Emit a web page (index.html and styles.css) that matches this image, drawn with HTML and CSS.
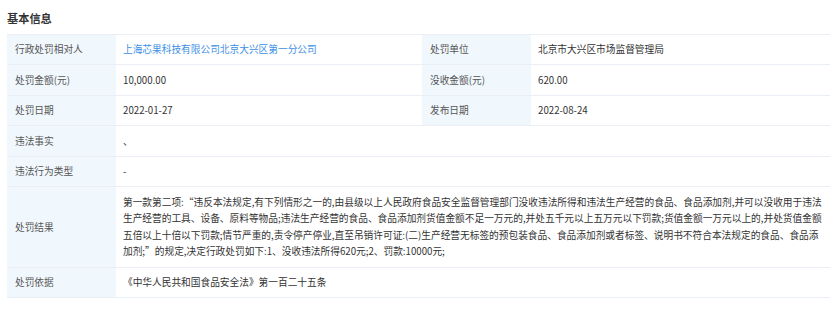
FILE: index.html
```html
<!DOCTYPE html>
<html lang="zh-CN">
<head>
<meta charset="utf-8">
<link rel="stylesheet" href="styles.css">
</head>
<body>
<div class="page">
  <h2 class="title">基本信息</h2>
  <div class="table">
    <div class="cell label">行政处罚相对人</div>
    <div class="cell value"><a class="link" href="#">上海芯果科技有限公司北京大兴区第一分公司</a></div>
    <div class="cell label">处罚单位</div>
    <div class="cell value">北京市大兴区市场监督管理局</div>

    <div class="cell label">处罚金额(元)</div>
    <div class="cell value">10,000.00</div>
    <div class="cell label">没收金额(元)</div>
    <div class="cell value">620.00</div>

    <div class="cell label">处罚日期</div>
    <div class="cell value">2022-01-27</div>
    <div class="cell label">发布日期</div>
    <div class="cell value">2022-08-24</div>

    <div class="cell label">违法事实</div>
    <div class="cell value wide">、</div>

    <div class="cell label">违法行为类型</div>
    <div class="cell value wide">-</div>

    <div class="cell label">处罚结果</div>
    <div class="cell value wide para">第一款第二项:“违反本法规定,有下列情形之一的,由县级以上人民政府食品安全监督管理部门没收违法所得和违法生产经营的食品、食品添加剂,并可以没收用于违法生产经营的工具、设备、原料等物品;违法生产经营的食品、食品添加剂货值金额不足一万元的,并处五千元以上五万元以下罚款;货值金额一万元以上的,并处货值金额五倍以上十倍以下罚款;情节严重的,责令停产停业,直至吊销许可证:(二)生产经营无标签的预包装食品、食品添加剂或者标签、说明书不符合本法规定的食品、食品添加剂;”的规定,决定行政处罚如下:1、没收违法所得620元;2、罚款:10000元;</div>

    <div class="cell label">处罚依据</div>
    <div class="cell value wide">《中华人民共和国食品安全法》第一百二十五条</div>
  </div>
</div>
</body>
</html>
```

FILE: styles.css
```css
html, body {
  margin: 0;
  padding: 0;
  background: #ffffff;
  overflow: hidden;
}
body {
  font-family: "Noto Sans CJK SC", "Microsoft YaHei", sans-serif;
  color: #333333;
}
.page {
  padding: 10px 0 0 7px;
}
.title {
  margin: 0;
  font-size: 11.2px;
  line-height: 16px;
  font-weight: bold;
  color: #333333;
}
.table {
  margin-top: 8px;
  width: 830px;
  display: grid;
  grid-template-columns: 109px 306px 109px 306px;
  border-top: 1px solid #e9eff5;
}
.cell {
  font-size: 9.7px;
  line-height: 16.4px;
  min-height: 30.4px;
  box-sizing: border-box;
  border-bottom: 1px solid #e9eff5;
  display: flex;
  align-items: center;
}
.label {
  background: #f1f8fd;
  color: #555555;
  padding: 0 8px;
}
.value {
  padding: 0 7px;
  color: #333333;
}
.wide {
  grid-column: span 3;
}
.para {
  padding: 7px 10px 7px 7px;
}
.link {
  color: #3d8fe6;
  text-decoration: none;
}
```
